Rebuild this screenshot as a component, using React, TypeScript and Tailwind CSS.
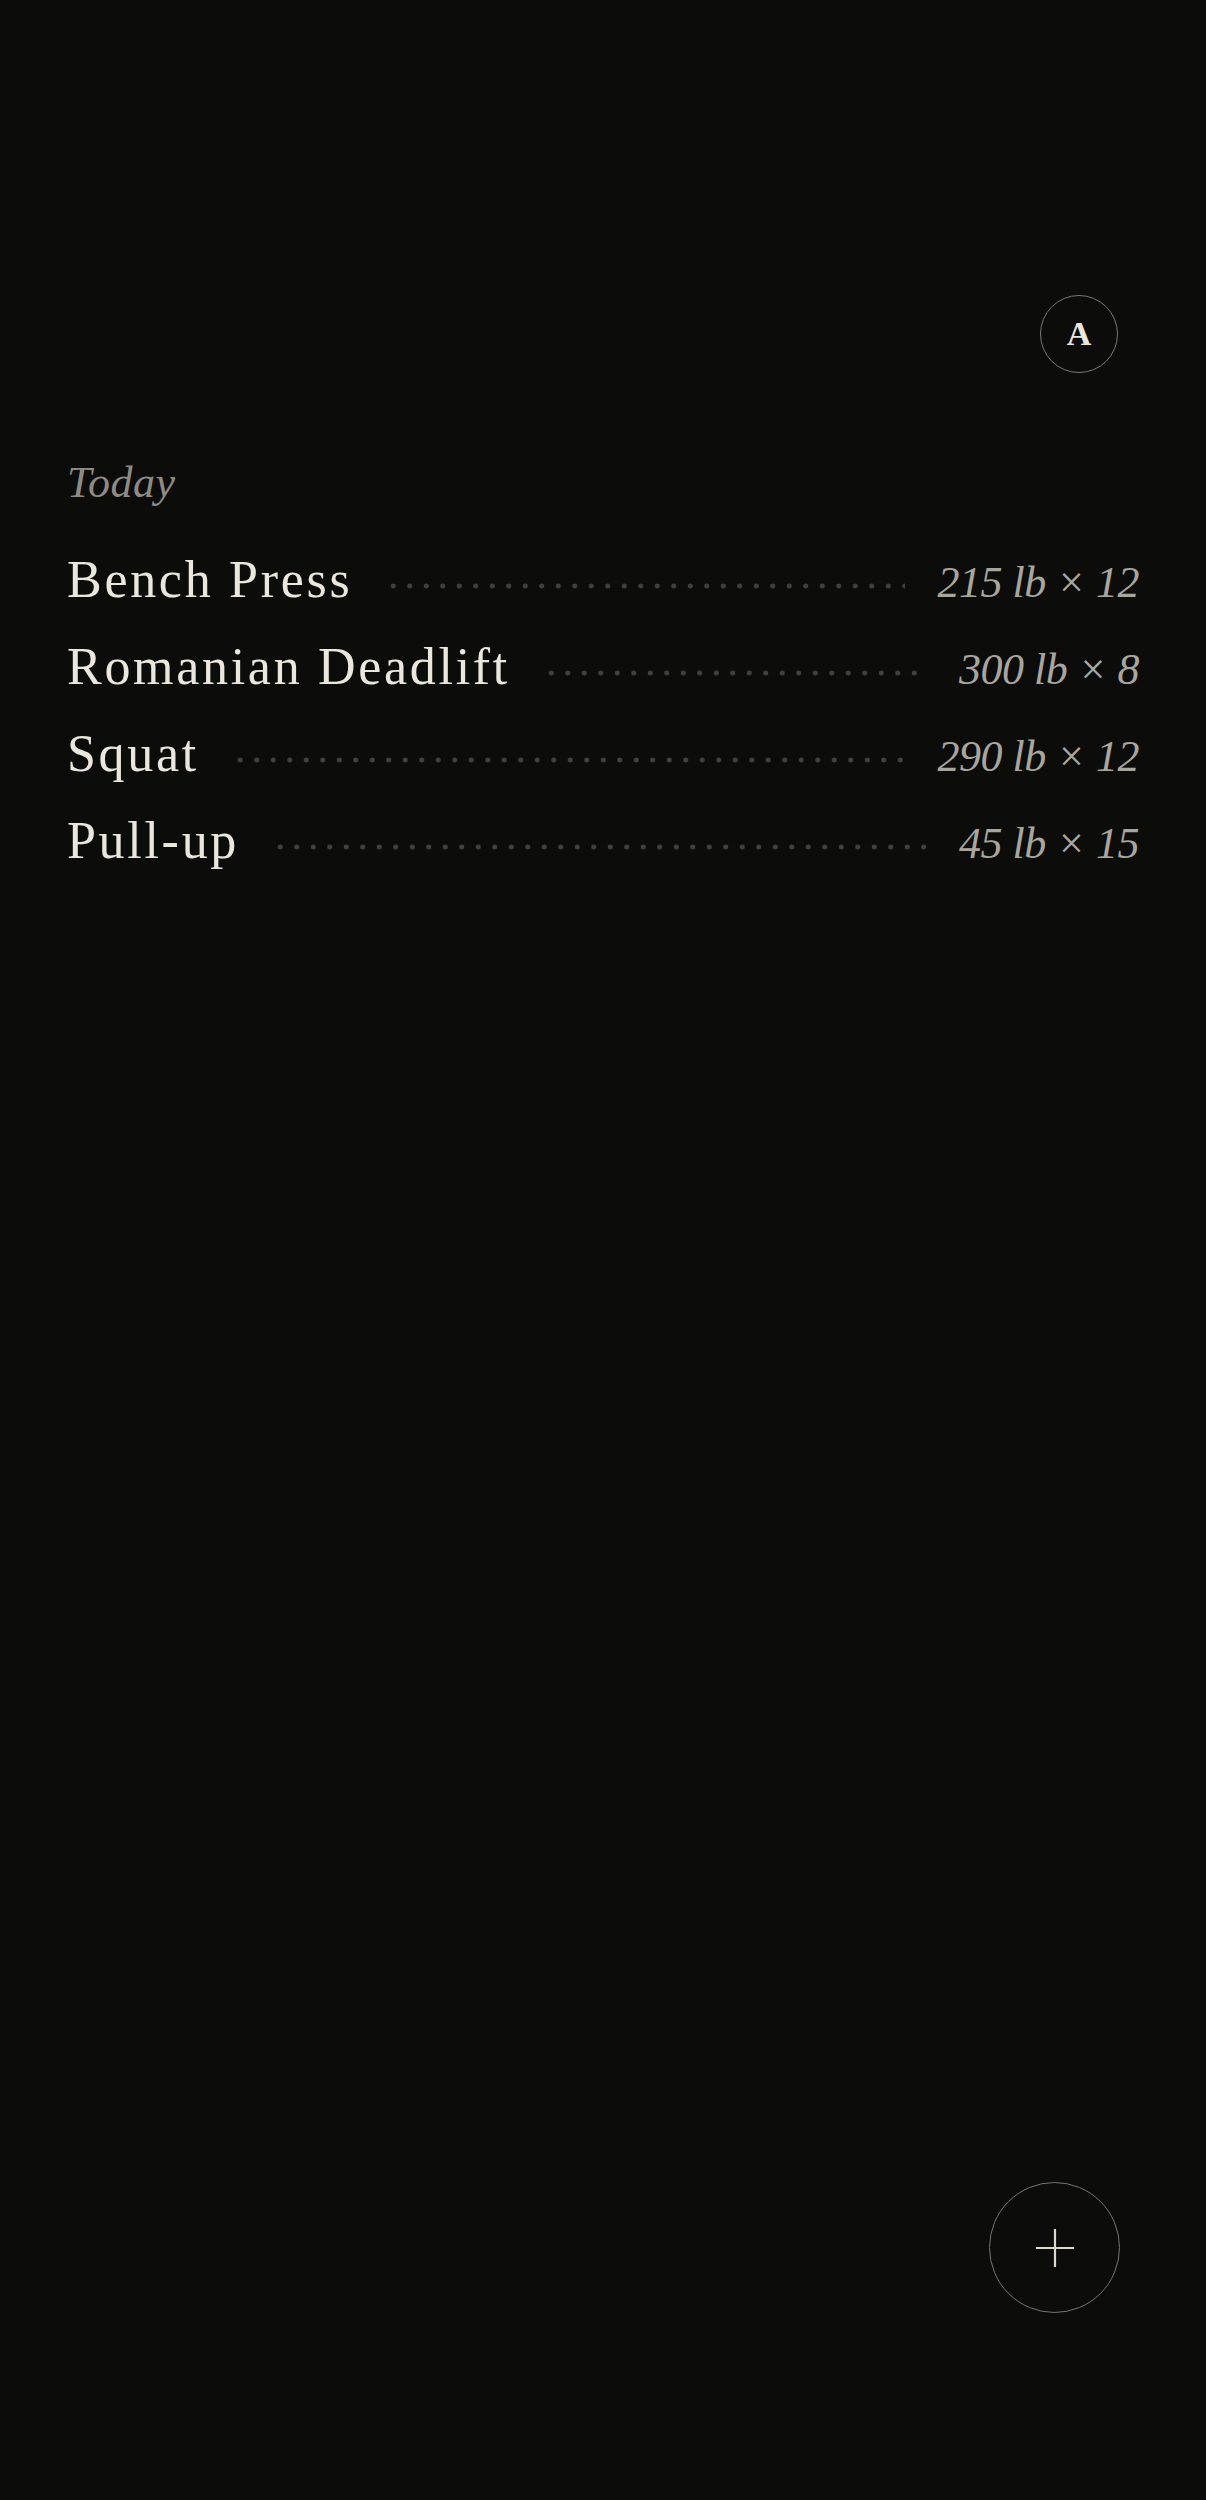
interface Lift { name: string; weight: number; reps: number; }

const LIFTS: Lift[] = [
  { name: "Bench Press", weight: 215, reps: 12 },
  { name: "Romanian Deadlift", weight: 300, reps: 8 },
  { name: "Squat", weight: 290, reps: 12 },
  { name: "Pull-up", weight: 45, reps: 15 },
];

const serif = "font-['Liberation_Serif','Times_New_Roman',serif]";

export default function App() {
  return (
    <div className={`flex min-h-[2500px] flex-col bg-[#0c0c0a] px-[67px] ${serif}`}>
      <header className="flex justify-end pt-[295px] pr-[21px]">
        <button className="flex h-[78px] w-[78px] items-center justify-center rounded-full border-[1.5px] border-[#7a7871] text-[34px] leading-none font-semibold text-[#ebe7dd]">
          A
        </button>
      </header>

      <h2 className="mt-[88px] text-[44px] leading-none italic tracking-[0.5px] text-[#8e8b84]">Today</h2>

      <ul className="mt-[49px] flex flex-col gap-[35px]">
        {LIFTS.map(l => (
          <li key={l.name} className="flex items-baseline">
            <span className="text-[52px] leading-none tracking-[2.7px] text-[#ebe7dd]">{l.name}</span>
            <span className="mx-[33px] h-[22px] flex-1 bg-[radial-gradient(circle,#42413c_2.2px,transparent_2.8px)] bg-[length:16.5px_22px] bg-repeat-x bg-left" />
            <span className="text-[44px] leading-none italic tracking-[-0.5px] text-[#a9a69e]">
              {l.weight} lb × {l.reps}
            </span>
          </li>
        ))}
      </ul>

      <footer className="mt-auto flex justify-end pr-[19px] pb-[187px]">
        <button className="flex h-[131px] w-[131px] items-center justify-center rounded-full border-[1.5px] border-[#77756e] text-[#dcd8ce]">
          <svg width="40" height="40" viewBox="0 0 40 40" fill="none" stroke="currentColor" strokeWidth="2.2">
            <path d="M20 1v38M1 20h38" />
          </svg>
        </button>
      </footer>
    </div>
  );
}
